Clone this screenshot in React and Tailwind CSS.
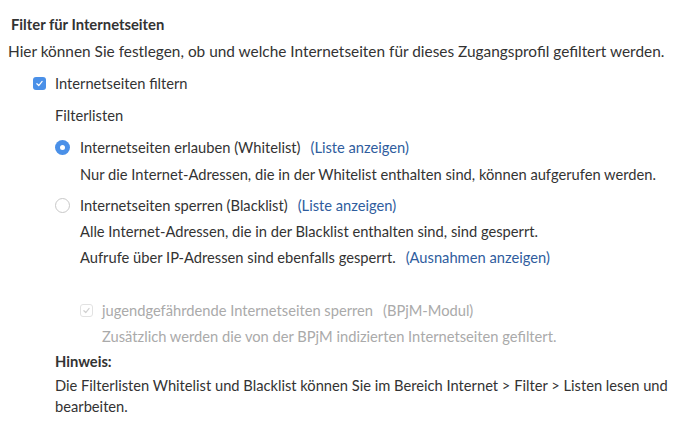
import React, { useState } from "react";

const LINK = "text-[#2f5d9e]";

const Check = ({ checked, disabled }) => (
  <span
    className={
      "flex h-[13px] w-[13px] shrink-0 items-center justify-center rounded-[3px] " +
      (disabled
        ? "border border-[#e2e2e2] bg-white"
        : checked
        ? "bg-[#4a90e8]"
        : "border border-[#b5b5b5] bg-white")
    }
  >
    {checked && (
      <svg viewBox="0 0 12 12" className="h-[9px] w-[9px]">
        <path
          d="M2.5 6.3 L5 8.7 L9.5 3.3"
          fill="none"
          stroke={disabled ? "#d0d0d0" : "#fff"}
          strokeWidth="1.6"
          strokeLinecap="round"
          strokeLinejoin="round"
        />
      </svg>
    )}
  </span>
);

const Radio = ({ checked }) => (
  <span
    className={
      "flex h-[15px] w-[15px] shrink-0 items-center justify-center rounded-full " +
      (checked ? "bg-[#4a90e8]" : "border border-[#c8c8c8] bg-white")
    }
  >
    {checked && <span className="h-[5px] w-[5px] rounded-full bg-white" />}
  </span>
);

export default function App() {
  const [mode, setMode] = useState("white");
  const [filter, setFilter] = useState(true);

  return (
    <div className="h-[429px] w-[700px] overflow-hidden bg-white px-2 pt-[12px] text-[14.7px] leading-[25px] text-[#333] [font-family:Lato,'Open_Sans',sans-serif]">
      <h3 className="pl-[3px] text-[14.8px] font-bold text-[#333]">Filter für Internetseiten</h3>
      <p className="mt-[2px] text-[15.4px]">
        Hier können Sie festlegen, ob und welche Internetseiten für dieses Zugangsprofil gefiltert werden.
      </p>

      <label className="mt-[7px] flex cursor-pointer items-center gap-[9px] pl-[25px]" onClick={() => setFilter(!filter)}>
        <Check checked={filter} />
        <span>Internetseiten filtern</span>
      </label>

      <div className="pl-[47px]">
        <div className="mt-[7px]">Filterlisten</div>

        <div className="mt-[7px] flex cursor-pointer items-center gap-[10px]" onClick={() => setMode("white")}>
          <Radio checked={mode === "white"} />
          <span>
            Internetseiten erlauben (Whitelist)
            <a className={"ml-[10px] cursor-pointer " + LINK}>(Liste anzeigen)</a>
          </span>
        </div>
        <div className="mt-[2px] pl-[25px]">
          Nur die Internet-Adressen, die in der Whitelist enthalten sind, können aufgerufen werden.
        </div>

        <div className="mt-[6px] flex cursor-pointer items-center gap-[10px]" onClick={() => setMode("black")}>
          <Radio checked={mode === "black"} />
          <span>
            Internetseiten sperren (Blacklist)
            <a className={"ml-[10px] cursor-pointer " + LINK}>(Liste anzeigen)</a>
          </span>
        </div>
        <div className="mt-[1px] pl-[25px]">
          Alle Internet-Adressen, die in der Blacklist enthalten sind, sind gesperrt.
        </div>
        <div className="mt-[1px] pl-[25px]">
          Aufrufe über IP-Adressen sind ebenfalls gesperrt.
          <a className={"ml-[10px] cursor-pointer " + LINK}>(Ausnahmen anzeigen)</a>
        </div>

        <div className="mt-[28px] flex items-center gap-[9px] pl-[25px] text-[#aaa]">
          <Check checked disabled />
          <span>
            jugendgefährdende Internetseiten sperren
            <span className="ml-[10px]">(BPjM-Modul)</span>
          </span>
        </div>
        <div className="mt-[1px] pl-[47px] text-[#aaa]">
          Zusätzlich werden die von der BPjM indizierten Internetseiten gefiltert.
        </div>

        <div className="font-bold">Hinweis:</div>
        <p className="mt-[1px] leading-[21px]">
          Die Filterlisten Whitelist und Blacklist können Sie im Bereich Internet &gt; Filter &gt; Listen lesen und bearbeiten.
        </p>
      </div>
    </div>
  );
}
